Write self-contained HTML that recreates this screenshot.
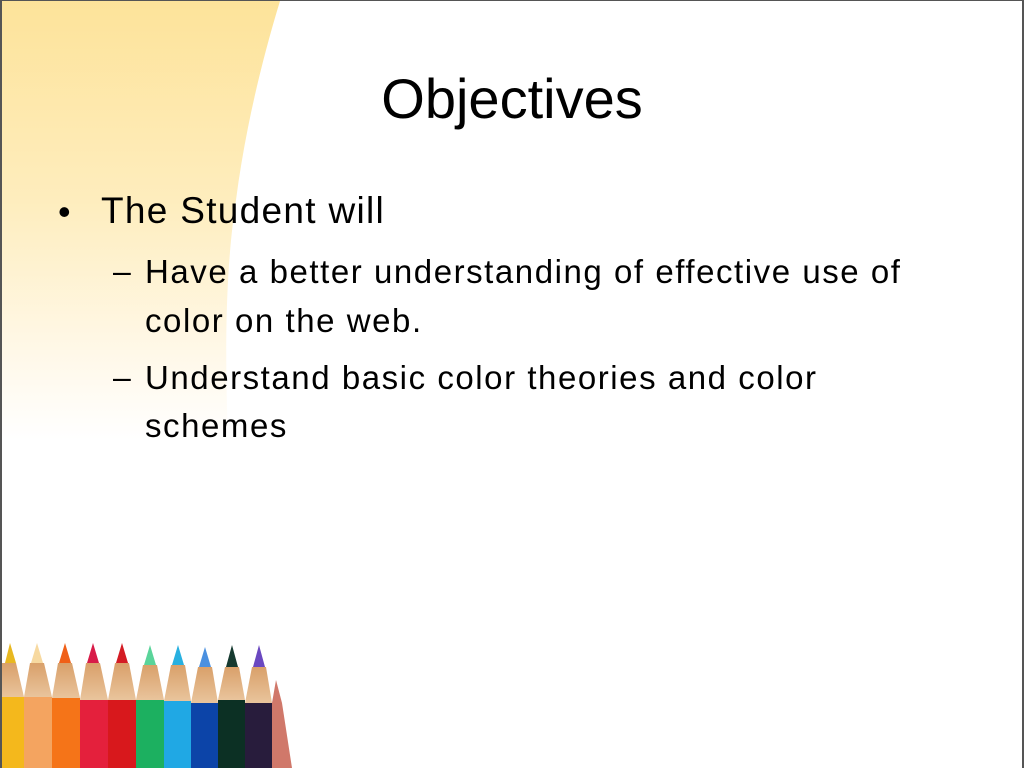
<!DOCTYPE html>
<html><head><meta charset="utf-8"><style>
html,body{margin:0;padding:0;background:#fff}
#s{position:relative;width:1024px;height:768px;overflow:hidden;background:#fff;font-family:"Liberation Sans",Carlito,sans-serif;color:#000}
.t{position:absolute;white-space:nowrap}
.b{font-size:37px;letter-spacing:1.3px}
.u{font-size:33px;letter-spacing:1.55px}
#bd{position:absolute;left:0;top:0;width:1024px;height:768px;box-sizing:border-box;border-top:1px solid #555;border-left:2px solid #555;border-right:2px solid #555}
</style></head><body><div id="s">
<svg width="1024" height="768" style="position:absolute;left:0;top:0">
<defs>
<linearGradient id="y" x1="0" y1="0" x2="0" y2="1">
<stop offset="0" stop-color="#fde39a"/><stop offset="0.45" stop-color="#feedbd"/><stop offset="0.8" stop-color="#fff8e8"/><stop offset="1" stop-color="#fff"/>
</linearGradient>
<linearGradient id="w" x1="0" y1="0" x2="0" y2="1"><stop offset="0" stop-color="#d9a06a"/><stop offset="1" stop-color="#e9c49c"/></linearGradient>
</defs>
<path d="M2 1 L280 1 C262 60 245 130 236 200 C227 260 224 330 228 440 L2 440 Z" fill="url(#y)"/>
<g>
<path d="M5 663 L10 643 L16 663 Z" fill="#e8b820"/><path d="M2 663 L16 663 L24 697 L2 697Z" fill="url(#w)"/><rect x="2" y="697" width="22" height="71" fill="#f4b81c"/>
<path d="M31 663 L37 643 L43 663 Z" fill="#f7d9a0"/><path d="M30 663 L44 663 L52 697 L24 697Z" fill="url(#w)"/><rect x="24" y="697" width="28" height="71" fill="#f4a460"/>
<path d="M59 663 L65 643 L71 663 Z" fill="#f06018"/><path d="M58 663 L72 663 L80 698 L52 698Z" fill="url(#w)"/><rect x="52" y="698" width="28" height="70" fill="#f57418"/>
<path d="M87 663 L93 643 L99 663 Z" fill="#d81c48"/><path d="M86 663 L100 663 L108 700 L80 700Z" fill="url(#w)"/><rect x="80" y="700" width="28" height="68" fill="#e4203c"/>
<path d="M116 663 L122 643 L128 663 Z" fill="#d41c24"/><path d="M115 663 L129 663 L136 700 L108 700Z" fill="url(#w)"/><rect x="108" y="700" width="28" height="68" fill="#d8181c"/>
<path d="M144 665 L150 645 L156 665 Z" fill="#5ad49a"/><path d="M143 665 L157 665 L164 700 L136 700Z" fill="url(#w)"/><rect x="136" y="700" width="28" height="68" fill="#1cb060"/>
<path d="M172 665 L178 645 L184 665 Z" fill="#28b0e0"/><path d="M171 665 L185 665 L191 701 L164 701Z" fill="url(#w)"/><rect x="164" y="701" width="27" height="67" fill="#20a8e4"/>
<path d="M199 667 L205 647 L211 667 Z" fill="#4a90e0"/><path d="M198 667 L212 667 L218 703 L191 703Z" fill="url(#w)"/><rect x="191" y="703" width="27" height="65" fill="#0c44a8"/>
<path d="M226 667 L232 645 L238 667 Z" fill="#163a30"/><path d="M225 667 L239 667 L245 700 L218 700Z" fill="url(#w)"/><rect x="218" y="700" width="27" height="68" fill="#0c3024"/>
<path d="M253 667 L259 645 L265 667 Z" fill="#6a48c0"/><path d="M252 667 L266 667 L272 703 L245 703Z" fill="url(#w)"/><rect x="245" y="703" width="27" height="65" fill="#281c3c"/>
<path d="M272 703 L276 680 L282 703 L292 768 L272 768Z" fill="#c86050" opacity="0.85"/>
</g>
</svg>
<div class="t" style="left:0;width:1024px;text-align:center;top:66px;font-size:56px">Objectives</div>
<div class="t" style="left:58px;top:191px;font-size:36px">•</div>
<div class="t b" style="left:101px;top:190px">The Student will</div>
<div class="t" style="left:113px;top:253px;font-size:32px">–</div>
<div class="t u" style="left:145px;top:253px">Have a better understanding of effective use of</div>
<div class="t u" style="left:145px;top:302px">color on the web.</div>
<div class="t" style="left:113px;top:359px;font-size:32px">–</div>
<div class="t u" style="left:145px;top:359px">Understand basic color theories and color</div>
<div class="t u" style="left:145px;top:407px">schemes</div>
<div id="bd"></div>
</div></body></html>
